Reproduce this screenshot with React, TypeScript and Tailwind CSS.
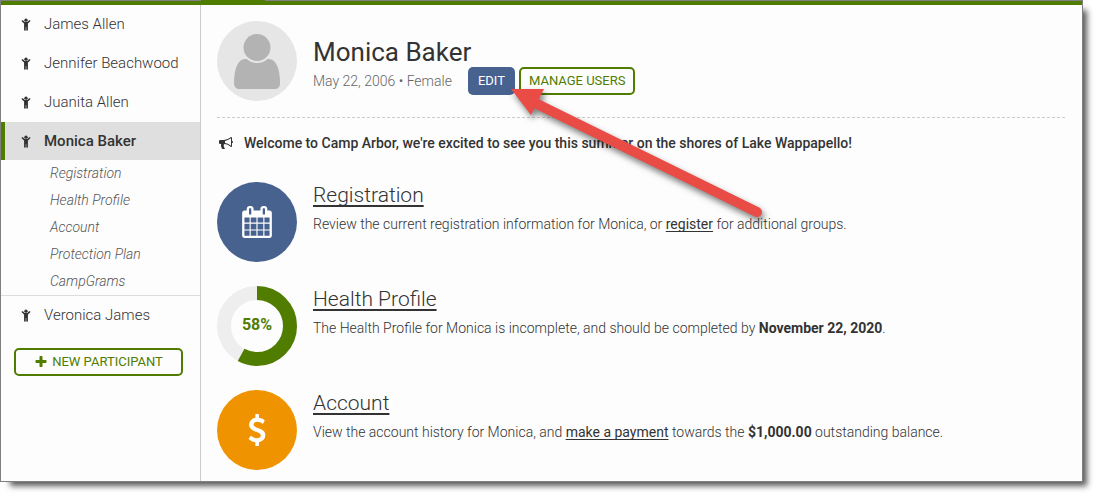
import type { ReactNode } from 'react';

const glyphs = {
  bullhorn:
    'M1664 640q53 0 90.5 37.5t37.5 90.5-37.5 90.5-90.5 37.5v384q0 52-38 90t-90 38q-417-347-812-380-58 19-91 66t-31 100.5 40 92.5q-20 33-23 65.5t6 58 33.5 55 48 50 61.5 50.5q-29 58-111.5 83t-168.5 11.5-132-55.5q-7-23-29.5-87.5t-32-94.5-23-89-15-101 3.5-98.5 22-110.5h-122q-66 0-113-47t-47-113v-192q0-66 47-113t113-47h480q435 0 896-384 52 0 90 38t38 90v384zm-128 604v-954q-394 302-768 343v270q377 42 768 341z',
  calendar:
    'M192 1664h288v-288h-288v288zm352 0h320v-288h-320v288zm-352-352h288v-320h-288v320zm352 0h320v-320h-320v320zm-352-384h288v-288h-288v288zm736 736h320v-288h-320v288zm-384-736h320v-288h-320v288zm768 736h288v-288h-288v288zm-384-352h320v-320h-320v320zm-352-864v-288q0-13-9.5-22.5t-22.5-9.5h-64q-13 0-22.5 9.5t-9.5 22.5v288q0 13 9.5 22.5t22.5 9.5h64q13 0 22.5-9.5t9.5-22.5zm736 864h288v-320h-288v320zm-384-384h320v-288h-320v288zm384 0h288v-288h-288v288zm32-480v-288q0-13-9.5-22.5t-22.5-9.5h-64q-13 0-22.5 9.5t-9.5 22.5v288q0 13 9.5 22.5t22.5 9.5h64q13 0 22.5-9.5t9.5-22.5zm384-64v1280q0 52-38 90t-90 38h-1408q-52 0-90-38t-38-90v-1280q0-52 38-90t90-38h128v-96q0-66 47-113t113-47h64q66 0 113 47t47 113v96h384v-96q0-66 47-113t113-47h64q66 0 113 47t47 113v96h128q52 0 90 38t38 90z',
  dollar:
    'M1362 1185q0 153-99.5 263.5t-258.5 136.5v175q0 14-9 23t-23 9h-135q-13 0-22.5-9.5t-9.5-22.5v-175q-66-9-127.5-31t-101.5-44.5-74-48-46.5-37.5-17.5-18q-17-21-2-41l103-135q7-10 23-12 15-2 24 9l2 2q113 99 243 125 37 8 74 8 81 0 142.5-43t61.5-122q0-28-15-53t-33.5-42-58.5-37.5-66-32-80-32.5q-39-16-61.5-25t-61.5-26.5-62.5-31-56.5-35.5-53.5-42.5-43.5-49-35.5-58-21-66.5-8.5-78q0-138 98-242t255-134v-180q0-13 9.5-22.5t22.5-9.5h135q14 0 23 9t9 23v176q57 6 110.5 23t87 33.5 63.5 37.5 39 29 15 14q17 18 5 38l-81 146q-8 15-23 16-14 3-27-7-3-3-14.5-12t-39-26.5-58.5-32-74.5-26-85.5-11.5q-95 0-155 43t-60 111q0 26 8.5 48t29.5 41.5 39.5 33 56 31 60.5 27 70 27.5q53 20 81 31.5t76 35 75.5 42.5 62 50 53 63.5 31.5 76.5 13 94z',
  plus:
    'M1600 736v192q0 40-28 68t-68 28h-416v416q0 40-28 68t-68 28h-192q-40 0-68-28t-28-68v-416h-416q-40 0-68-28t-28-68v-192q0-40 28-68t68-28h416v-416q0-40 28-68t68-28h192q40 0 68 28t28 68v416h416q40 0 68 28t28 68z',
};

const Glyph = ({ name, className }: { name: keyof typeof glyphs; className: string }) => (
  <svg viewBox="0 0 1792 1792" fill="currentColor" className={className} aria-hidden="true">
    <path d={glyphs[name]} />
  </svg>
);

const ChildIcon = () => (
  <svg viewBox="0 0 1328 1792" fill="currentColor" className="mr-[13px] h-[14px] w-[10px] shrink-0" aria-hidden="true">
    <circle cx="664" cy="384" r="224" />
    <path d="M1212 548l-292 292v824q0 46-33 79t-79 33-79-33-33-79v-384h-64v384q0 46-33 79t-79 33-79-33-33-79v-824l-292-292q-28-28-28-68t28-68q29-28 68.500-28t67.500 28l228 228h368l228-228q28-28 68-28t68 28q28 29 28 68.500t-28 67.500z" />
  </svg>
);

const participants = ['James Allen', 'Jennifer Beachwood', 'Juanita Allen', 'Monica Baker', 'Veronica James'];
const sections = ['Registration', 'Health Profile', 'Account', 'Protection Plan', 'CampGrams'];
const selected = 'Monica Baker';

const Sidebar = () => (
  <nav className="w-[200px] shrink-0 border-r border-[#ccc]">
    <ul>
      {participants.map((name) => (
        <li key={name}>
          <a
            href="#"
            className={
              name === selected
                ? 'flex h-[38px] items-center border-l-4 border-[#507c00] bg-[#dfdfdf] pl-4 text-[15px] font-medium'
                : 'mb-px flex h-[38px] items-center pl-5 text-[15px] font-light'
            }
          >
            <ChildIcon />
            {name}
          </a>
          {name === selected && (
            <ul className="border-b border-[#ddd]">
              {sections.map((section) => (
                <li key={section}>
                  <a href="#" className="block pl-[49px] text-[14px] leading-[27px] font-light text-[#555] italic">
                    {section}
                  </a>
                </li>
              ))}
            </ul>
          )}
        </li>
      ))}
    </ul>
    <div className="pt-[13px] pr-[17px] pl-[13px]">
      <button className="flex h-7 w-full items-center justify-center rounded-[5px] border-2 border-[#507c00] text-[13px] text-[#507c00]">
        <Glyph name="plus" className="mr-1 h-[14px] w-[14px]" />
        NEW PARTICIPANT
      </button>
    </div>
  </nav>
);

const Avatar = () => (
  <svg viewBox="0 0 80 80" className="h-20 w-20 shrink-0" role="img" aria-label="Monica Baker">
    <circle cx="40" cy="40" r="40" fill="#e6e6e6" />
    <path d="M28 38h24c7 0 11 10 11 24 0 4-2 6-6 6H23c-4 0-6-2-6-6 0-14 4-24 11-24z" fill="#b3b3b3" />
    <circle cx="40" cy="26.5" r="15.5" fill="#e6e6e6" />
    <circle cx="40" cy="26.5" r="13.5" fill="#b3b3b3" />
  </svg>
);

const ProgressRing = ({ percent }: { percent: number }) => (
  <svg viewBox="0 0 80 80" className="h-20 w-20 shrink-0" role="img" aria-label={`${percent}% complete`}>
    <circle cx="40" cy="40" r="33" fill="none" stroke="#eee" strokeWidth="14" />
    <circle
      cx="40"
      cy="40"
      r="33"
      fill="none"
      stroke="#507c00"
      strokeWidth="14"
      pathLength="100"
      strokeDasharray={`${percent} 100`}
      transform="rotate(-90 40 40)"
    />
    <text x="40" y="44" textAnchor="middle" fill="#507c00" className="text-[16px] font-bold">
      {percent}%
    </text>
  </svg>
);

const Section = ({ icon, title, children }: { icon: ReactNode; title: string; children: ReactNode }) => (
  <section className="flex gap-4">
    {icon}
    <div>
      <h2 className="text-[21px] leading-[26px] font-light">
        <a href="#" className="underline decoration-2 underline-offset-3 [text-decoration-skip-ink:none]">{title}</a>
      </h2>
      <p className="mt-1 text-[14px] leading-6 font-light">{children}</p>
    </div>
  </section>
);

const inlineLink = 'font-normal underline underline-offset-2 [text-decoration-skip-ink:none]';

const App = () => {
  return (
    <div className="bg-white pr-[15px] pb-4 font-['Roboto',sans-serif] text-[#333]">
      <div className="relative border border-t-0 border-[#808080] bg-[#fdfdfd] shadow-[7px_7px_6px_-3px_rgba(0,0,0,0.65)]">
        <div className="h-[5px] border-t border-[#808080] bg-[#507c00]">
          <div className="-mt-px ml-[200px] h-px w-16 bg-[#507c00]" />
        </div>
        <div className="flex">
          <Sidebar />
          <main className="min-w-0 flex-1 pt-4 pr-[17px] pb-[11px] pl-4">
            <header className="flex gap-4 border-b border-dashed border-[#ccc] pb-4">
              <Avatar />
              <div className="pt-4">
                <h1 className="text-[26px] leading-[30px]">Monica Baker</h1>
                <div className="flex items-center text-[14px]">
                  <span className="mr-4 font-light text-[#666]">May 22, 2006 • Female</span>
                  <button className="mr-1 h-7 rounded-[5px] bg-[#48628f] px-[10px] text-[13px] text-white">EDIT</button>
                  <button className="h-7 rounded-[5px] border-2 border-[#507c00] px-2 text-[13px] text-[#507c00]">MANAGE USERS</button>
                </div>
              </div>
            </header>

            <p className="flex h-16 items-start gap-[11px] pt-[15px] text-[14px] leading-5 font-medium">
              <Glyph name="bullhorn" className="mt-[3px] ml-[2px] h-[14px] w-[14px]" />
              Welcome to Camp Arbor, we're excited to see you this summer on the shores of Lake Wappapello!
            </p>

            <div className="flex flex-col gap-6">
              <Section
                title="Registration"
                icon={
                  <div className="flex h-20 w-20 shrink-0 items-center justify-center rounded-full bg-[#48628f] text-white">
                    <Glyph name="calendar" className="h-8 w-8" />
                  </div>
                }
              >
                Review the current registration information for Monica, or{' '}
                <a href="#" className={inlineLink}>register</a> for additional groups.
              </Section>
              <Section title="Health Profile" icon={<ProgressRing percent={58} />}>
                The Health Profile for Monica is incomplete, and should be completed by{' '}
                <strong className="font-bold">November 22, 2020</strong>.
              </Section>
              <Section
                title="Account"
                icon={
                  <div className="flex h-20 w-20 shrink-0 items-center justify-center rounded-full bg-[#f09300] text-white">
                    <Glyph name="dollar" className="h-8 w-8" />
                  </div>
                }
              >
                View the account history for Monica, and <a href="#" className={inlineLink}>make a payment</a> towards the{' '}
                <strong className="font-bold">$1,000.00</strong> outstanding balance.
              </Section>
            </div>
          </main>
        </div>

        {/* Callout arrow pointing at the edit button */}
        <svg
          viewBox="0 0 270 150"
          className="pointer-events-none absolute top-20 left-[500px] h-[150px] w-[270px] drop-shadow-[2px_4px_3px_rgba(0,0,0,0.5)]"
          aria-hidden="true"
        >
          <path d="M32 22L256 132" stroke="#e94b45" strokeWidth="10" strokeLinecap="round" />
          <path d="M10 9L43 9L30 35z" fill="#e94b45" />
        </svg>
      </div>
    </div>
  );
};

export default App;
